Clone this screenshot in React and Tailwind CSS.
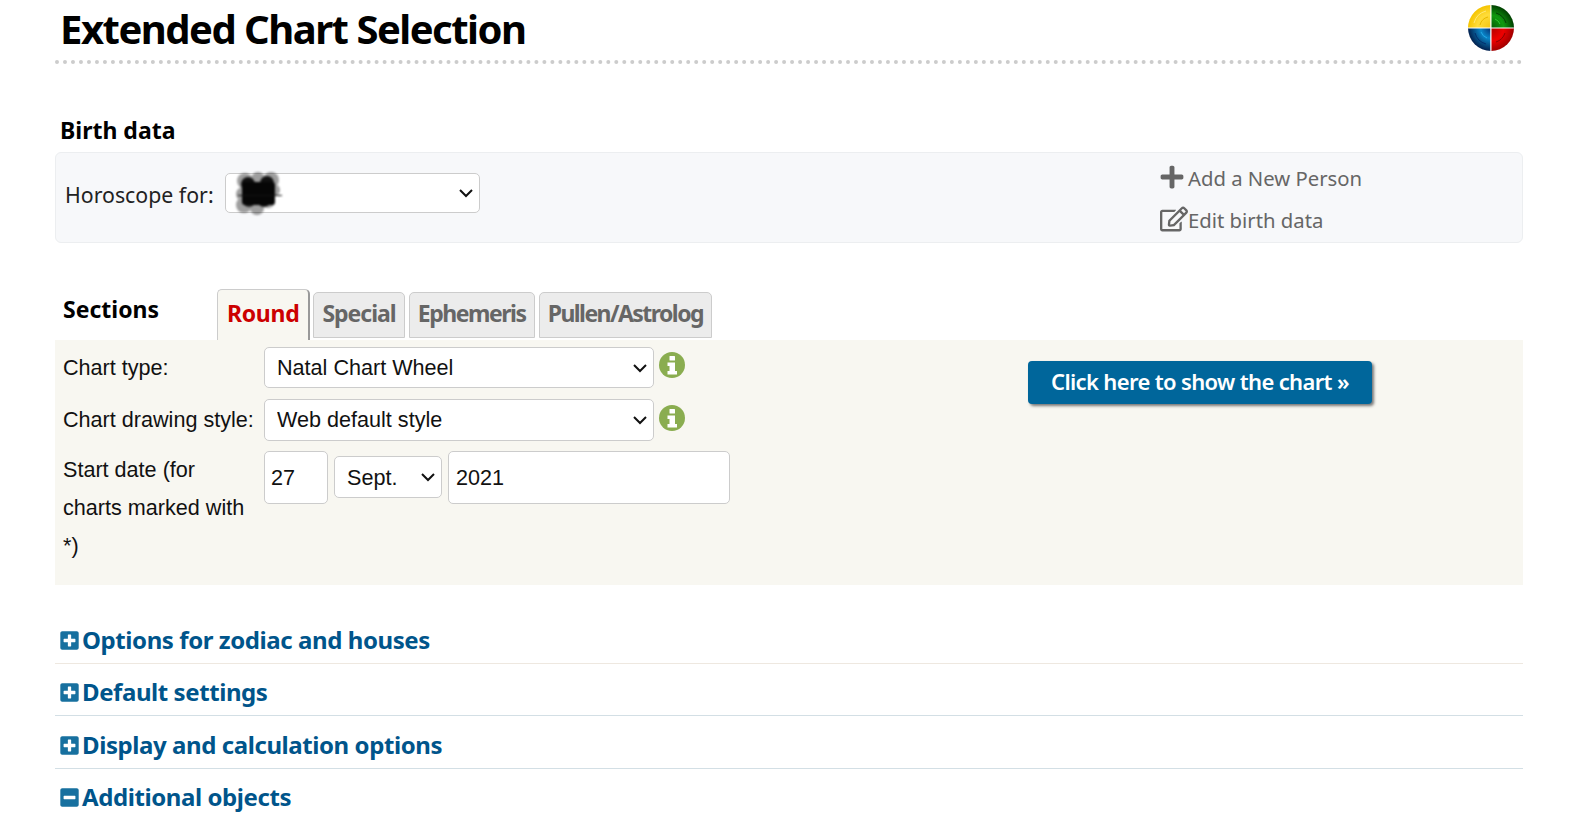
import React from "react";
import { FaPlus, FaRegEdit, FaPlusSquare, FaMinusSquare } from "react-icons/fa";

const heading = "font-['Noto_Sans',sans-serif]";
const arial = "font-['Liberation_Sans',Arial,sans-serif]";

// round logo: four coloured quarters with a white cross
const Logo = () => (
  <svg width="46" height="46" viewBox="0 0 46 46" className="mt-[5px] mr-[9px] shrink-0">
    <defs>
      <clipPath id="disc"><circle cx="23" cy="23" r="23" /></clipPath>
      <radialGradient id="gold" cx="100%" cy="100%" r="100%">
        <stop offset="0%" stopColor="#f2c40f" />
        <stop offset="60%" stopColor="#ffdc3a" />
        <stop offset="100%" stopColor="#f5c400" />
      </radialGradient>
      <radialGradient id="leaf" cx="0%" cy="100%" r="100%">
        <stop offset="0%" stopColor="#055a05" />
        <stop offset="55%" stopColor="#0f9a0f" />
        <stop offset="100%" stopColor="#003f00" />
      </radialGradient>
      <radialGradient id="sea" cx="100%" cy="0%" r="100%">
        <stop offset="0%" stopColor="#052a70" />
        <stop offset="45%" stopColor="#0a86c8" />
        <stop offset="100%" stopColor="#02204e" />
      </radialGradient>
      <radialGradient id="fire" cx="0%" cy="0%" r="100%">
        <stop offset="0%" stopColor="#b00000" />
        <stop offset="55%" stopColor="#ee0000" />
        <stop offset="100%" stopColor="#a00000" />
      </radialGradient>
    </defs>
    <g clipPath="url(#disc)">
      <rect x="0" y="0" width="23" height="23" fill="url(#gold)" />
      <rect x="23" y="0" width="23" height="23" fill="url(#leaf)" />
      <rect x="0" y="23" width="23" height="23" fill="url(#sea)" />
      <rect x="23" y="23" width="23" height="23" fill="url(#fire)" />
      <g fill="none" strokeWidth="1">
        <path d="M6 18 A17 17 0 0 1 18 6" stroke="#ffe97a" />
        <path d="M12 20 A11 11 0 0 1 20 12" stroke="#e8b800" />
        <path d="M28 8 A15 15 0 0 1 38 18" stroke="#053f05" />
        <path d="M27 14 A9 9 0 0 1 32 19" stroke="#33c433" />
        <path d="M7 28 A16 16 0 0 0 18 39" stroke="#04306e" />
        <path d="M13 27 A10 10 0 0 0 19 33" stroke="#25a9e6" />
        <path d="M28 37 A14 14 0 0 0 37 28" stroke="#8c0000" />
      </g>
      <rect x="22.25" y="0" width="1.25" height="46" fill="#fff" />
      <rect x="0" y="22.5" width="46" height="1" fill="#fff" />
    </g>
  </svg>
);

// the scribble that hides the person's name
const Scribble = () => (
  <svg width="48" height="46" viewBox="0 0 48 46" className="absolute left-[9px] top-[-3px] pointer-events-none blur-[0.8px]">
    <g fill="#000" opacity="0.38">
      <circle cx="11" cy="11" r="8" />
      <circle cx="24" cy="9" r="7" />
      <circle cx="37" cy="10" r="8" />
      <circle cx="40" cy="20" r="6" />
      <circle cx="9" cy="24" r="7" />
      <circle cx="10" cy="35" r="8" />
      <circle cx="23" cy="38" r="7" />
      <circle cx="34" cy="31" r="7" />
    </g>
    <circle cx="14" cy="14" r="7" fill="#111" />
    <circle cx="33" cy="13" r="7" fill="#111" />
    <circle cx="15" cy="31" r="6" fill="#222" />
    <circle cx="30" cy="31" r="6" fill="#111" />
    <rect x="8" y="12" width="33" height="23" rx="3" fill="#060606" />
    <rect x="4" y="25" width="44" height="1" fill="#111" />
  </svg>
);

// heavier "i" than the packaged info icons
const InfoIcon = () => (
  <svg width="26" height="26" viewBox="0 0 26 26" className="ml-[5px] mb-[5px] shrink-0">
    <circle cx="13" cy="13" r="13" fill="#8aad50" />
    <rect x="10.5" y="4" width="5.5" height="4.5" rx="0.5" fill="#fff" />
    <path d="M8.5 10.5 H16 V19 H18 V22.5 H8.5 V19 H10.5 V14 H8.5 Z" fill="#fff" />
  </svg>
);

const selectCls = "border border-[#ccc] rounded-[5px] bg-white text-[#111] " + arial;

const Select = ({ value, className, textCls = "", chevronCls = "right-[6px]", children }) => (
  <div className={"relative " + className}>
    <select defaultValue={value} className={"appearance-none w-full h-full pl-[12px] " + textCls + " " + selectCls}>
      <option>{value}</option>
    </select>
    <svg width="16" height="10" viewBox="0 0 16 10" className={"absolute top-1/2 -translate-y-1/2 pointer-events-none " + chevronCls}>
      <path d="M2 2 L8 8 L14 2" fill="none" stroke="#111" strokeWidth="2" />
    </svg>
    {children}
  </div>
);

const Accordion = ({ title, open, rowCls }) => {
  const Icon = open ? FaMinusSquare : FaPlusSquare;
  return (
    <div className={"flex items-end pl-[4px] " + rowCls}>
      <div className="flex items-center h-[32px] mb-[7px]">
        <Icon className="text-[#17709f] text-[21px] shrink-0 mr-[2px]" />
        <span className={"text-[#00558b] text-[24px] tracking-[-0.42px] font-bold leading-[32px] " + heading}>{title}</span>
      </div>
    </div>
  );
};

const tabCls =
  "h-[46px] mb-[2px] pb-[3px] px-[8px] flex items-center bg-[#ececec] border border-[#ccc] rounded-t-[5px] text-[#666] text-[23px] font-bold " + heading;

const App = () => {
  return (
    <div className="h-[817px] overflow-hidden bg-white">
      <div className="ml-[55px] w-[1468px]">
        {/* Title bar */}
        <div className="flex justify-between items-start h-[64px] border-b-4 border-dotted border-[#ccc]">
          <h1 className={"pl-[5px] pt-[3px] text-[40px] tracking-[-1.5px] leading-[52px] font-bold text-black " + heading}>
            Extended Chart Selection
          </h1>
          <Logo />
        </div>

        {/* Birth data */}
        <h2 className={"mt-[54px] mb-[10px] pl-[5px] h-[24px] text-[23px] leading-[24px] font-bold text-black " + heading}>
          Birth data
        </h2>
        <div className="flex h-[91px] bg-[#f7f8fa] border border-[#eceef0] rounded-[6px]">
          <div className="flex items-start pl-[9px] pt-[20px]">
            <span className={"pt-[2px] text-[21.3px] leading-[40px] text-[#222] mr-[11px] " + heading}>Horoscope for:</span>
            <Select value="" className="w-[255px] h-[40px]">
              <Scribble />
            </Select>
          </div>
          <div className={"ml-auto w-[362px] pt-[11px] text-[20.3px] text-[#666] " + heading}>
            <div className="flex items-center h-[28px]">
              <FaPlus className="text-[26px] mr-[3px] -ml-[1px] -mt-[2px]" />
              <span>Add a New Person</span>
            </div>
            <div className="flex items-center h-[28px] mt-[14px]">
              <FaRegEdit className="text-[28px] shrink-0 -mt-[2px]" />
              <span>Edit birth data</span>
            </div>
          </div>
        </div>

        {/* Sections tabs */}
        <div className="flex items-end mt-[46px] h-[51px]">
          <div className={"self-start w-[162px] pl-[8px] pt-[4px] text-[23px] leading-[32px] font-bold text-black " + heading}>
            Sections
          </div>
          <div className={"h-[51px] pb-[3px] px-[9px] flex items-center bg-[#f8f7f1] border border-[#ccc] border-b-0 border-r-2 border-r-[#999] rounded-t-[5px] text-[#c00] text-[23px] tracking-[-0.3px] font-bold " + heading}>
            Round
          </div>
          <div className={"ml-[3px] tracking-[-1px] " + tabCls}>Special</div>
          <div className={"ml-[4px] tracking-[-1.45px] " + tabCls}>Ephemeris</div>
          <div className={"ml-[4px] tracking-[-1.55px] " + tabCls}>Pullen/Astrolog</div>
        </div>

        <div className="flex items-start h-[245px] bg-[#f8f7f1]">
          <div className={"w-[675px] pl-[8px] pt-[7px] grid grid-cols-[201px_1fr] gap-y-[11px] text-[21.6px] text-[#111] " + arial}>
            <div className="flex items-center h-[41px] pt-[1px]">Chart type:</div>
            <div className="flex items-center">
              <Select value="Natal Chart Wheel" className="w-[390px] h-[41px]" textCls="pt-[2px]" />
              <InfoIcon />
            </div>
            <div className="flex items-center h-[42px]">Chart drawing style:</div>
            <div className="flex items-center">
              <Select value="Web default style" className="w-[390px] h-[42px]" />
              <InfoIcon />
            </div>
            <div className="leading-[38px] -mt-[1px] pr-[12px]">Start date (for charts marked with *)</div>
            <div className="flex items-start -mt-[1px]">
              <input defaultValue="27" className={"w-[64px] h-[53px] px-[6px] " + selectCls} />
              <Select value="Sept." className="w-[108px] h-[42px] mt-[5px] ml-[6px]" textCls="pt-[3px]" />
              <input defaultValue="2021" className={"w-[282px] h-[53px] ml-[6px] px-[7px] " + selectCls} />
            </div>
          </div>
          <button className={"ml-[298px] mt-[21px] w-[344px] h-[43px] pb-[2px] bg-[#00669b] text-white text-[22px] tracking-[-0.65px] font-semibold rounded-[4px] shadow-[2px_2px_3px_#777] " + heading}>
            Click here to show the chart »
          </button>
        </div>

        {/* Collapsible option groups */}
        <div className="mt-[26px]">
          <Accordion title="Options for zodiac and houses" rowCls="h-[53px] border-b border-[#eee8e0]" />
          <Accordion title="Default settings" rowCls="h-[52px] border-b border-[#d3dfe5]" />
          <Accordion title="Display and calculation options" rowCls="h-[53px] border-b border-[#d3dfe5]" />
          <Accordion title="Additional objects" open rowCls="h-[51px]" />
        </div>
      </div>
    </div>
  );
};

export default App;
